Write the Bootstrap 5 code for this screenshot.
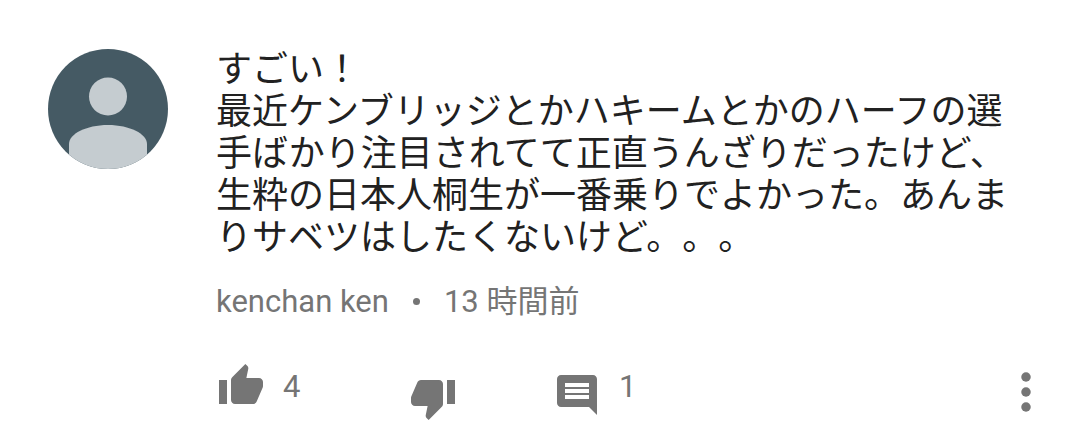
<!DOCTYPE html>
<html lang="ja">
<head>
  <meta charset="UTF-8">
  <meta name="viewport" content="width=device-width, initial-scale=1">
  <title>コメント</title>
  <link href="https://cdn.jsdelivr.net/npm/bootstrap@5.3.3/dist/css/bootstrap.min.css" rel="stylesheet">
  <style>
    body {
      background-color: #fff;
      color: #212121;
      font-family: Roboto, "Noto Sans CJK JP", sans-serif;
    }
    .comment {
      padding: 49px 48px 0;
      gap: 48px;
    }
    .avatar {
      width: 120px;
      height: 120px;
    }
    .comment-text {
      font-size: 36px;
      line-height: 42px;
      white-space: nowrap;
      text-spacing-trim: space-all; /* keep full-width 。 */
    }
    .comment-meta {
      margin-top: 22px;
      font-size: 31px;
      line-height: 42px;
      color: #757575;
    }
    .comment-meta .dot {
      margin: 0 24px 2px;
      width: 7px;
      height: 7px;
      background-color: #757575;
    }
    .comment-actions {
      margin: 39px 0 0 1px;
      height: 60px;
      font-size: 31px;
      line-height: 50px;
      color: #757575;
    }
    .comment-actions svg {
      width: 48px;
      height: 48px;
      fill: #757575;
    }
    .like-count {
      width: 126px;
      margin-left: 18px;
    }
    .dislike-icon {
      margin: 12px 96px 0 0;
    }
    .reply-icon {
      margin-top: 9px;
    }
    .reply-count {
      margin-left: 18px;
    }
    .comment-actions .more-icon {
      width: 60px;
      height: 60px;
      margin-right: -24px;
    }
  </style>
</head>
<body>

<div class="comment d-flex align-items-start">
  <svg class="avatar rounded-circle flex-shrink-0" viewBox="0 0 120 120">
    <rect width="120" height="120" fill="#455a64"/>
    <circle cx="60" cy="47.5" r="19" fill="#c5ccd0"/>
    <path d="M21 120V95C21 85 38 76 60 76s39 9 39 19v25z" fill="#c5ccd0"/>
  </svg>

  <div class="flex-grow-1">
    <p class="comment-text mb-0">すごい！<br>最近ケンブリッジとかハキームとかのハーフの選<br>手ばかり注目されてて正直うんざりだったけど、<br>生粋の日本人桐生が一番乗りでよかった。あんま<br>りサベツはしたくないけど。。。</p>

    <div class="comment-meta d-flex align-items-center">
      <span>kenchan ken</span>
      <span class="dot rounded-circle"></span>
      <span>13 時間前</span>
    </div>

    <!-- Actions -->
    <div class="comment-actions d-flex align-items-start">
      <svg viewBox="0 0 24 24"><path d="M1 21h4V9H1v12zm22-11c0-1.1-.9-2-2-2h-6.31l.95-4.57.03-.32c0-.41-.17-.79-.44-1.06L14.17 1 7.59 7.59C7.22 7.95 7 8.45 7 9v10c0 1.1.9 2 2 2h9c.83 0 1.54-.5 1.84-1.22l3.02-7.05c.09-.23.14-.47.14-.73v-2z"/></svg>
      <span class="like-count">4</span>
      <svg class="dislike-icon" viewBox="0 0 24 24"><path d="M15 3H6c-.83 0-1.54.5-1.84 1.22l-3.02 7.05c-.09.23-.14.47-.14.73v2c0 1.1.9 2 2 2h6.31l-.95 4.57-.03.32c0 .41.17.79.44 1.06L9.83 23l6.59-6.59c.36-.36.58-.86.58-1.41V5c0-1.1-.9-2-2-2zm4 0v12h4V3h-4z"/></svg>
      <svg class="reply-icon" viewBox="0 0 24 24"><path d="M21.99 4c0-1.1-.89-2-1.99-2H4c-1.1 0-2 .9-2 2v12c0 1.1.9 2 2 2h14l4 4-.01-18zM18 14H6v-2h12v2zm0-3H6V9h12v2zm0-3H6V6h12v2z"/></svg>
      <span class="reply-count">1</span>
      <svg class="more-icon ms-auto" viewBox="0 0 24 24"><circle cx="12" cy="6" r="1.9"/><circle cx="12" cy="12" r="1.9"/><circle cx="12" cy="18" r="1.9"/></svg>
    </div>
  </div>
</div>

<script src="https://cdn.jsdelivr.net/npm/bootstrap@5.3.3/dist/js/bootstrap.bundle.min.js"></script>
</body>
</html>
